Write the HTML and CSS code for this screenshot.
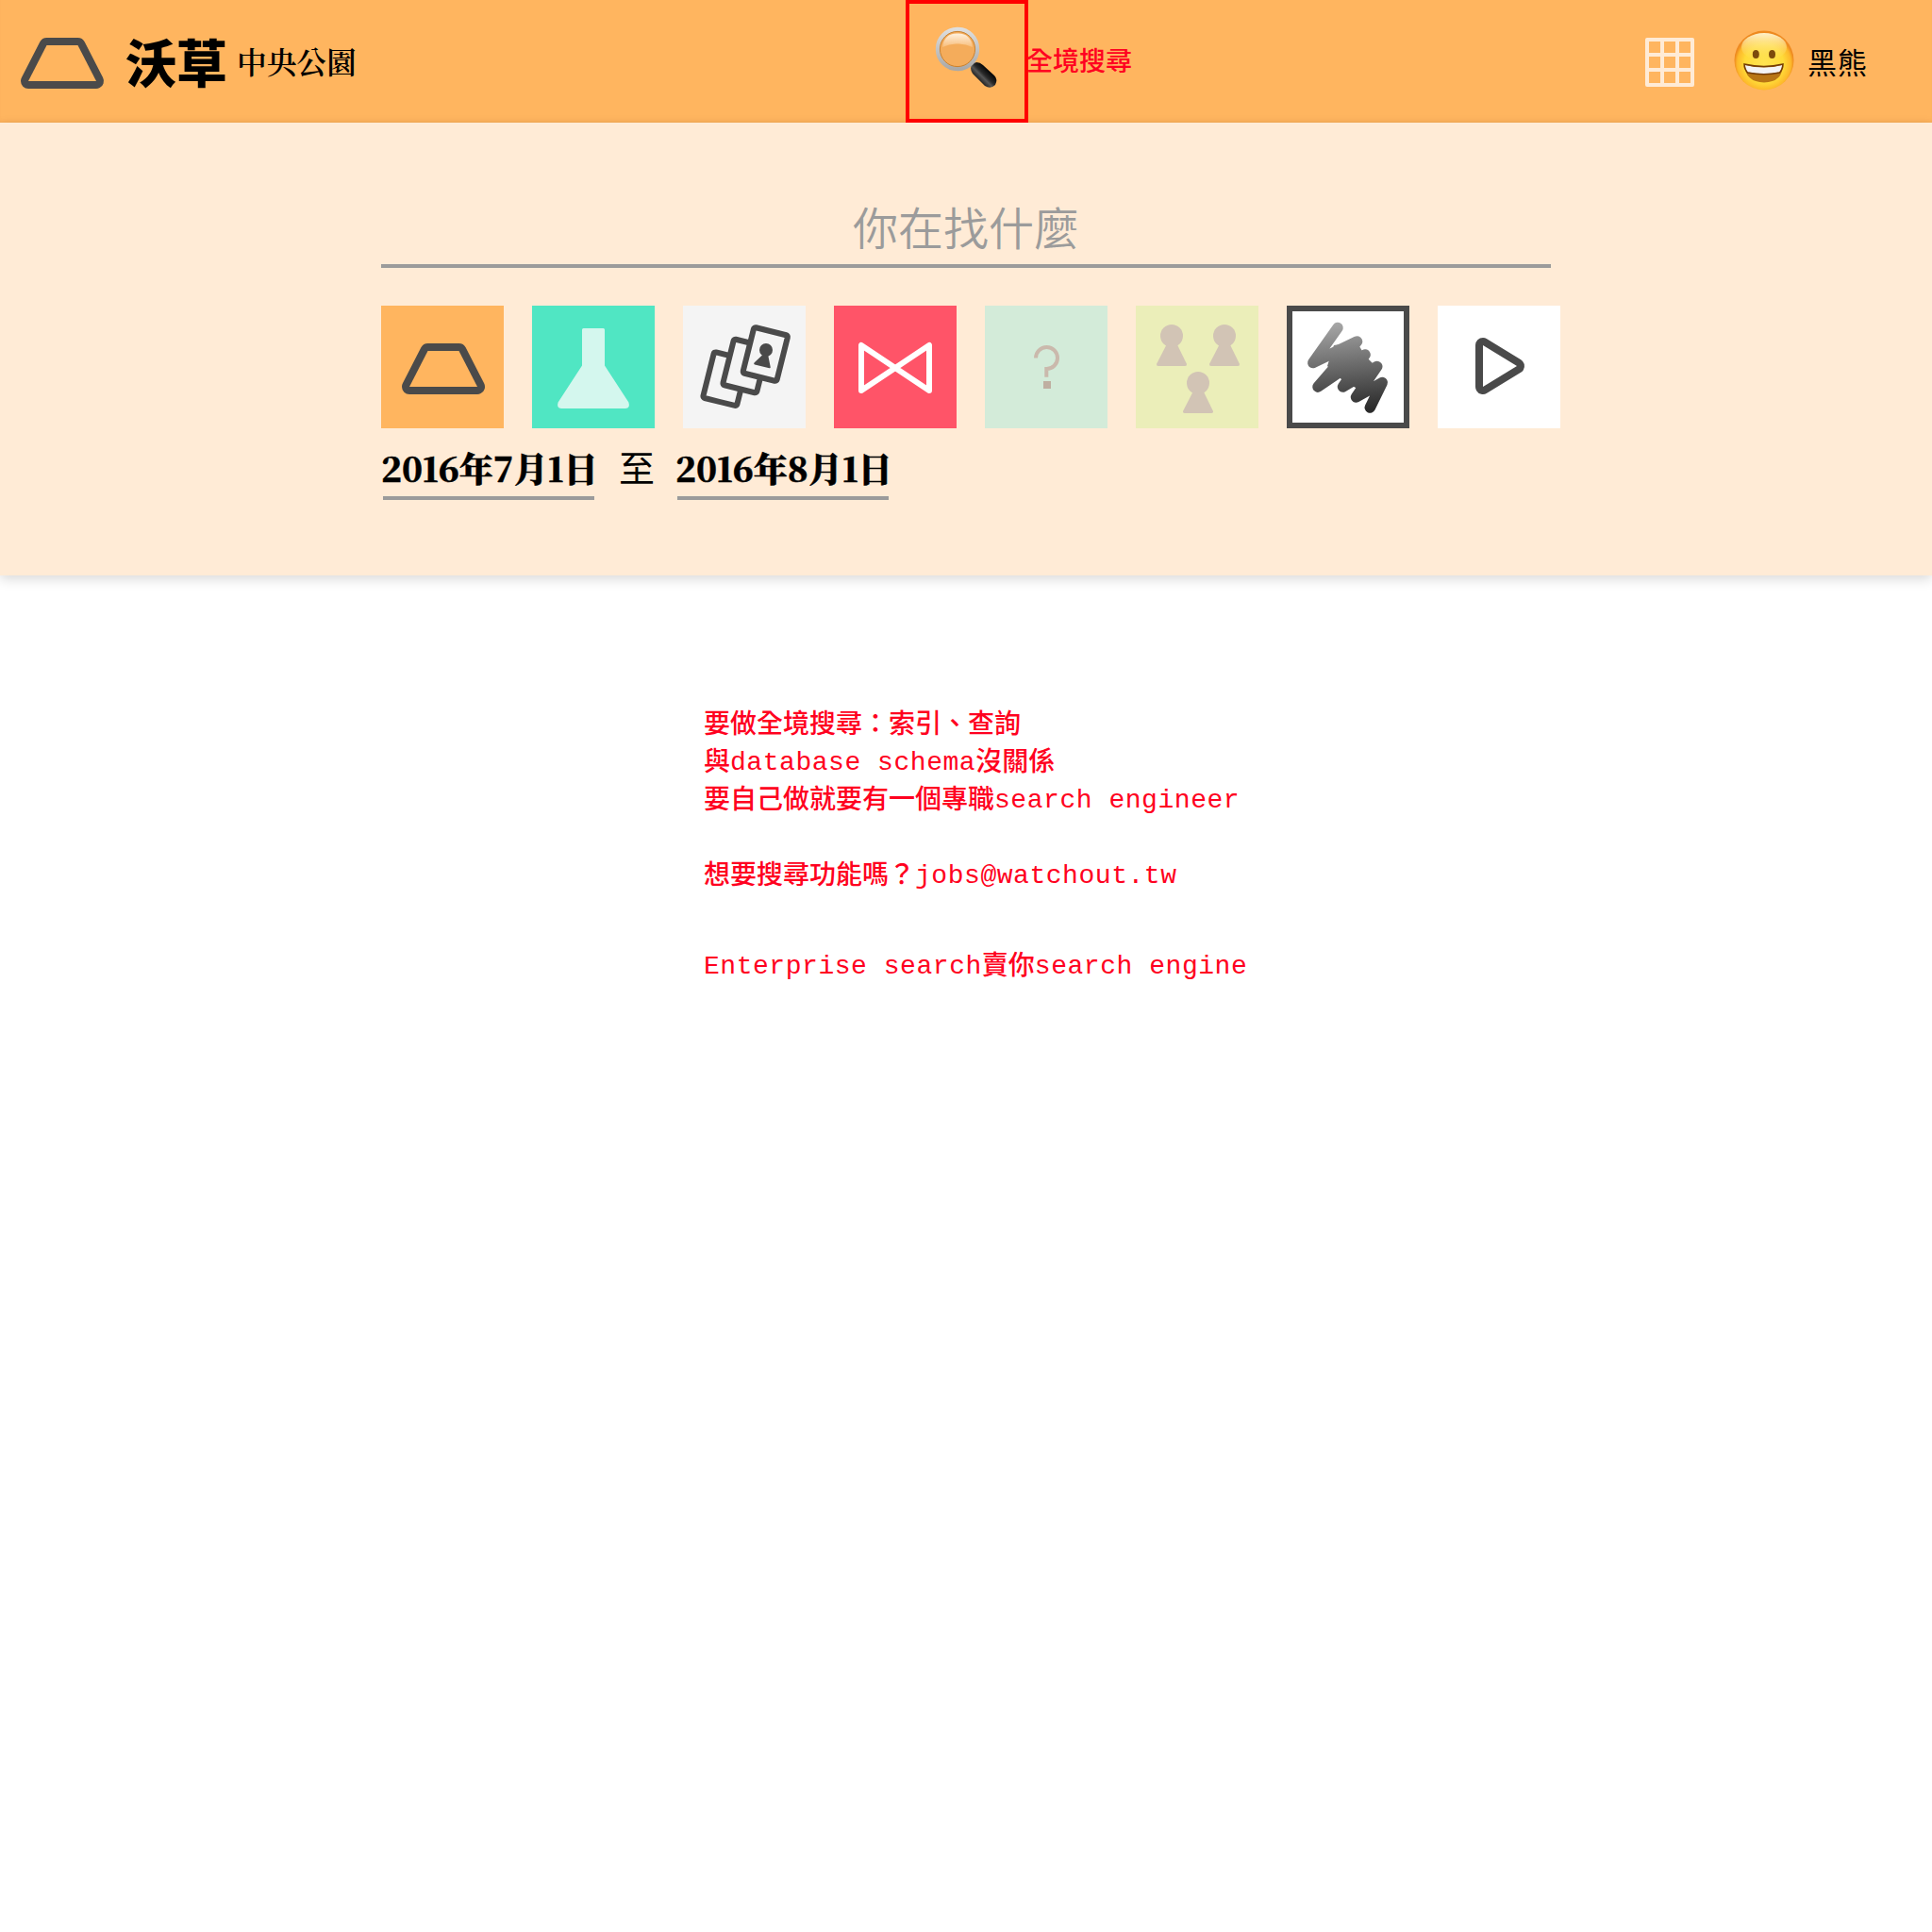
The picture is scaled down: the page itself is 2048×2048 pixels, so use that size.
FILE: index.html
```html
<!DOCTYPE html>
<html lang="zh-Hant">
<head>
<meta charset="utf-8">
<title>沃草 中央公園</title>
<link rel="stylesheet" href="styles.css">
</head>
<body>
<header class="topbar">
  <a class="brand">
    <svg class="brand-mark" viewBox="0 0 130 130"><path class="frame" d="M49.5 48H82.5L102 86H30Z"/><path class="hole-orange" d="M49.5 48H82.5L102 86H30Z"/></svg>
    <span class="brand-name">沃草</span>
    <span class="brand-section">中央公園</span>
  </a>
  <div class="search-button">
    <svg viewBox="0 0 122 122">
      <defs>
        <linearGradient id="ring" x1="0" y1="0" x2="0" y2="1"><stop offset="0" stop-color="#dedede"/><stop offset="1" stop-color="#aaa9a8"/></linearGradient>
        <linearGradient id="shine" x1="0" y1="0" x2="0" y2="1"><stop offset="0" stop-color="#fff1df"/><stop offset="1" stop-color="#f8bd79"/></linearGradient>
        <linearGradient id="handle" gradientUnits="userSpaceOnUse" x1="71" y1="81" x2="82" y2="70"><stop offset="0" stop-color="#111"/><stop offset=".45" stop-color="#555"/><stop offset=".65" stop-color="#292929"/><stop offset="1" stop-color="#0b0b0b"/></linearGradient>
      </defs>
      <path d="M64 61L71 68" stroke="#77736e" stroke-width="6"/>
      <path d="M65 68Q66 64 71 62Q75 62 78 65L90 76Q94 80 91 86Q86 91 80 87L67 74Q65 71 65 68Z" fill="url(#handle)"/>
      <circle cx="51" cy="48" r="21" fill="#f4ac5b" stroke="url(#ring)" stroke-width="4.4"/>
      <circle cx="51" cy="48" r="18.6" fill="none" stroke="#c98231" stroke-width="1"/>
      <path d="M35 46Q37 31 51 31.500Q65 31 67 46Q59 42 51 42.500Q43 42 35 46Z" fill="url(#shine)"/>
    </svg>
  </div>
  <div class="search-note">全境搜尋</div>
  <nav class="account">
    <svg class="apps" viewBox="0 0 52 52"><rect x="2" y="2" width="48" height="48"/><path d="M18 2V50M34 2V50M2 18H50M2 34H50"/></svg>
    <svg class="avatar" viewBox="0 0 66 66">
      <defs>
        <radialGradient id="face" cx=".5" cy=".55" r=".5"><stop offset="0" stop-color="#ffe352"/><stop offset=".65" stop-color="#ffdb38"/><stop offset=".9" stop-color="#fdb92b"/><stop offset="1" stop-color="#ee8a20"/></radialGradient>
        <linearGradient id="glow" x1="0" y1="0" x2="0" y2="1"><stop offset="0" stop-color="#fff3cd"/><stop offset="1" stop-color="#ffdc55" stop-opacity="0"/></linearGradient>
      </defs>
      <circle cx="33" cy="33" r="31.500" fill="url(#face)"/>
      <ellipse cx="33" cy="19" rx="24" ry="15" fill="url(#glow)"/>
      <ellipse cx="24.300" cy="26.500" rx="3.500" ry="4.500" fill="#7c4a0c"/>
      <ellipse cx="41.500" cy="26.500" rx="3.500" ry="4.500" fill="#7c4a0c"/>
      <path d="M12 37Q33 42 53 37Q53 56 33 56.500Q13 56 12 37Z" fill="#b87515"/>
      <path d="M13 38Q33 43 52 38Q52 43 49 45.500Q33 49 16 45.500Q13 43 13 38Z" fill="#f3f3f5"/>
      <path d="M12 37Q33 42 53 37Q53 42 49.500 46Q33 49.500 15.500 46Q12 42 12 37Z" fill="none" stroke="#743c05" stroke-width="1.500"/>
    </svg>
    <span class="user-name">黑熊</span>
  </nav>
</header>

<section class="search-panel">
  <div class="query">你在找什麼</div>
  <div class="tiles">
    <div class="tile orange"><svg viewBox="0 0 130 130"><path class="frame" d="M49.500 48H82.500L102 86H30Z"/><path class="hole-orange" d="M49.500 48H82.500L102 86H30Z"/></svg></div>
    <div class="tile mint"><svg viewBox="0 0 130 130"><path fill="#d4f7ee" d="M54.500 24H75.500Q77 24 77 25.500V63.500L102.400 102.500Q104.500 109 99 109H31Q25.500 109 27.600 102.500L53 63.500V25.500Q53 24 54.500 24Z"/></svg></div>
    <div class="tile pale"><svg viewBox="0 0 130 130">
      <g class="card"><rect x="-18.500" y="-25" width="37" height="50" rx="2" transform="translate(45 77.700) rotate(14)"/><rect x="-18.500" y="-25" width="37" height="50" rx="2" transform="translate(66 64) rotate(14)"/><rect x="-18.500" y="-25" width="37" height="50" rx="2" transform="translate(87.300 51.500) rotate(14)"/></g>
      <g class="dark"><circle cx="88" cy="47" r="7"/><path d="M84.500 52L75.500 60.500Q74.500 62 76 62.500L91.500 66.300Q93 66.500 92.700 65L90.300 53Z"/></g>
    </svg></div>
    <div class="tile red"><svg viewBox="0 0 130 130"><path class="bow" d="M29 42V90L101 42V90Z"/></svg></div>
    <div class="tile aqua"><svg viewBox="0 0 130 130"><path d="M54 55.500A11.500 11.500 0 1 1 65.300 67V75.700" fill="none" stroke="#cab9ac" stroke-width="4"/><path d="M62 80h8v8h-8z" fill="#bfafa1"/></svg></div>
    <div class="tile lime"><svg viewBox="0 0 130 130">
      <defs><g id="pawn"><circle cx="38" cy="32" r="12"/><path d="M32.500 41.500L22.200 61.500Q21.500 64 24 64H52Q54.500 64 53.800 61.500L44 41.500Z"/></g></defs>
      <g fill="#d2c4b5"><use href="#pawn"/><use href="#pawn" x="56"/><use href="#pawn" x="28" y="50"/></g>
    </svg></div>
    <div class="tile outlined"><svg viewBox="6 6 118 118">
      <defs><linearGradient id="ink" gradientUnits="userSpaceOnUse" x1="60" y1="18" x2="70" y2="112"><stop offset="0" stop-color="#a6a6a6"/><stop offset="1" stop-color="#2b2b2b"/></linearGradient></defs>
      <path d="M54 23.500L27.800 60.500L74.500 38L33 86L83 52L59.500 86L95.700 64.500L73.500 97L101.300 81.500L88.300 108" fill="none" stroke="url(#ink)" stroke-width="11.500" stroke-linecap="round" stroke-linejoin="round"/>
      <path d="M50 42L74 38L83 53L95 65L88 95L60 80L43 64Z" fill="url(#ink)"/>
    </svg></div>
    <div class="tile white"><svg viewBox="0 0 130 130"><path class="frame" d="M48 42L84 64L48 86Z"/><path fill="#fff" d="M48 42L84 64L48 86Z"/></svg></div>
  </div>
  <div class="dates">
    <span class="date">2016年7月1日</span>
    <span class="to">至</span>
    <span class="date">2016年8月1日</span>
  </div>
</section>

<main class="notes">
  <p>要做全境搜尋：索引、查詢<br>與<code>database schema</code>沒關係<br>要自己做就要有一個專職<code>search engineer</code></p>
  <p>想要搜尋功能嗎？<code>jobs@watchout.tw</code></p>
  <p class="vendor"><code>Enterprise search</code>賣你<code>search engine</code></p>
</main>
</body>
</html>
```
FILE: styles.css
```css
* { box-sizing: border-box; }
body {
  margin: 0;
  min-height: 2048px;
  background: #fff;
  color: #000;
  font-family: "Noto Sans CJK TC", sans-serif;
}
svg { display: block; }

.topbar {
  display: grid;
  grid-template: 130px / 960px 130px 1fr auto;
  height: 130px;
  background: #ffb55f;
  box-shadow: inset 0 -3px 4px -3px rgba(160, 90, 20, .15);
}
.brand { display: flex; align-items: center; white-space: nowrap; }
.brand-mark { width: 130px; height: 130px; }
.brand-name {
  width: 121px;
  padding-left: 3px;
  font-size: 54px;
  font-weight: 900;
  line-height: 130px;
}
.brand-section {
  font-family: "Noto Serif CJK TC", "Noto Sans CJK TC", serif;
  font-size: 31.7px;
  font-weight: 600;
  line-height: 128px;
}
.search-button { border: 4px solid #f00; }
.search-note {
  margin-left: -2px;
  color: #ff0020;
  font-size: 28px;
  font-weight: 500;
  line-height: 126px;
}
.account { display: flex; align-items: center; width: 304px; }
.apps { width: 52px; height: 52px; margin-top: 2px; fill: none; stroke: #ffebd6; stroke-width: 4; stroke-linejoin: round; }
.avatar { width: 66px; height: 66px; margin: -3px 0 0 41px; }
.user-name { margin-left: 13px; font-size: 31px; letter-spacing: 1px; line-height: 130px; }

.search-panel {
  height: 480px;
  padding: 76px 394px 0 404px;
  background: #ffebd6;
  box-shadow: 0 4px 12px rgba(0, 0, 0, .15);
}
.query {
  width: 1240px;
  height: 78px;
  border-bottom: 4px solid #9b9b9b;
  color: #9b9b9b;
  font-size: 48px;
  font-weight: 350;
  line-height: 67px;
  text-align: center;
}
.tiles { display: flex; gap: 30px; margin-top: 40px; }
.tile { width: 130px; height: 130px; }
.orange { background: #ffb55f; }
.mint { background: #50e6c3; }
.pale { background: #f4f4f4; }
.red { background: #ff5468; }
.aqua { background: #d3ebd9; }
.lime { background: #ebeeb9; }
.outlined { border: 6px solid #4a4a4a; background: #fff; }
.white { background: #fff; }
.frame { fill: #4a4a4a; stroke: #4a4a4a; stroke-width: 16; stroke-linejoin: round; }
.hole-orange { fill: #ffb55f; }
.card { fill: #f4f4f4; stroke: #4a4a4a; stroke-width: 6; }
.dark { fill: #4a4a4a; }
.bow { fill: none; stroke: #fff; stroke-width: 6; stroke-linejoin: round; }

.dates { display: flex; height: 76px; margin-left: 2px; }
.date {
  width: 224px;
  border-bottom: 4px solid #9b9b9b;
  font-family: "Noto Serif CJK TC", "Noto Sans CJK TC", serif;
  font-size: 36px;
  font-weight: 900;
  line-height: 83px;
  text-indent: -2px;
  white-space: nowrap;
  -webkit-text-stroke: .5px #000;
}
.to { width: 88px; padding-left: 26px; font-size: 38px; line-height: 79px; }

.notes {
  padding: 135px 0 0 746px;
  color: #ff0020;
  font-size: 28px;
  font-weight: 500;
  line-height: 40px;
  white-space: nowrap;
}
.notes p { margin: 0 0 40px; }
.notes .vendor { margin-top: 56px; }
.notes code {
  position: relative;
  top: -1px;
  font-family: "Liberation Mono", monospace;
  font-size: 28px;
  font-weight: 400;
  letter-spacing: .54px;
  line-height: 1;
}
```
